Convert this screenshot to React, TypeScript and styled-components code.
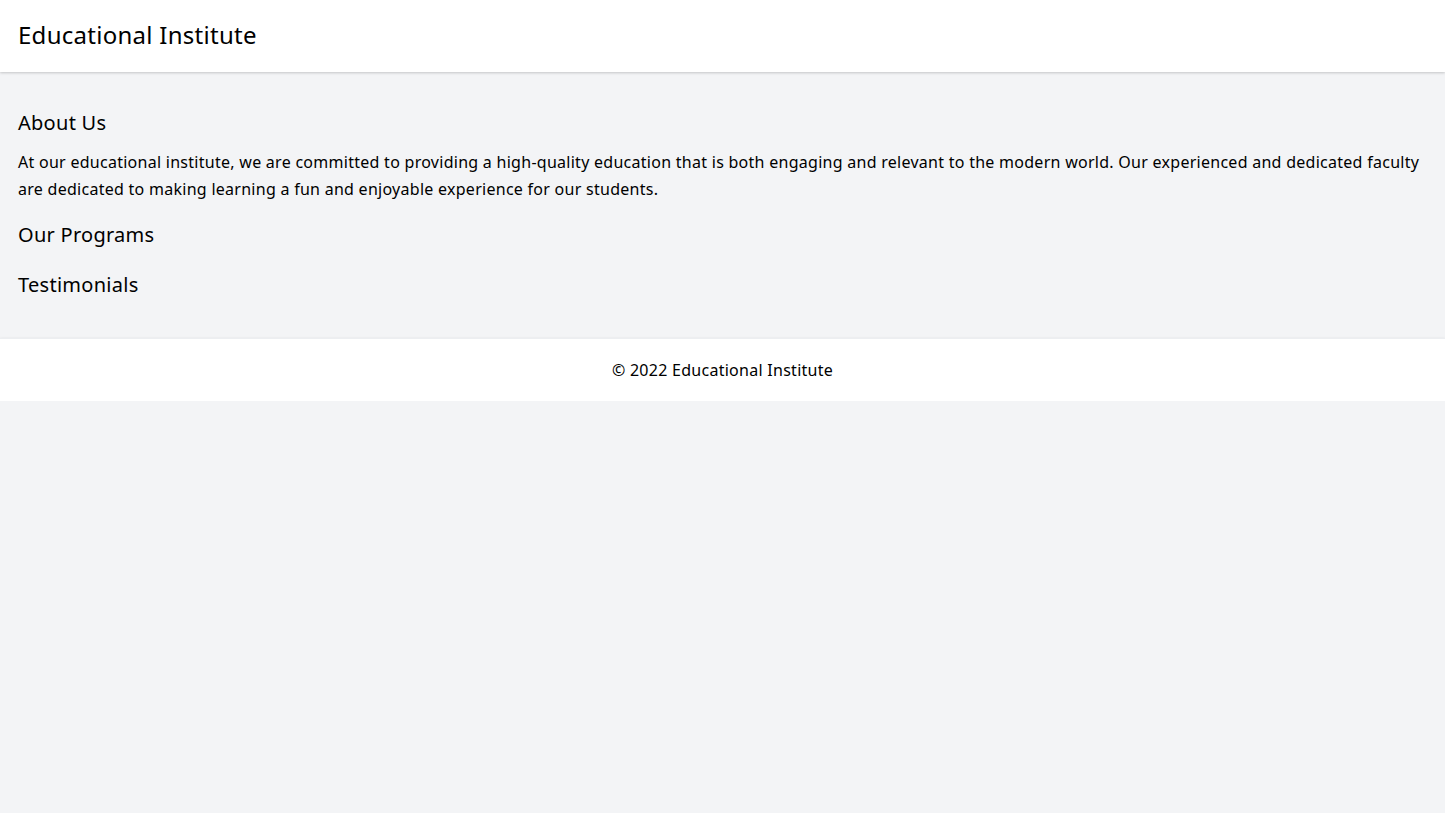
import React from "react";
import styled, { createGlobalStyle } from "styled-components";

const Global = createGlobalStyle`
  html, body { margin: 0; padding: 0; }
  body {
    background: #f3f4f6;
    font-family: "Noto Sans", "Open Sans", sans-serif;
    letter-spacing: 0.017em;
    color: #000;
  }
  * { box-sizing: border-box; }
`;

const Header = styled.header`
  background: #fff;
  box-shadow: 0 1px 3px rgba(0,0,0,0.12), 0 1px 2px rgba(0,0,0,0.08);
  padding: 17px 18px 19px;
  position: relative;
`;

const Title = styled.h1`
  margin: 0;
  font-size: 24px;
  line-height: 36px;
  font-weight: 400;
`;

const Main = styled.main`
  display: flex;
  flex-direction: column;
  gap: 18px;
  padding: 37px 18px 35px;
`;

const Section = styled.section`
  display: flex;
  flex-direction: column;
`;

const Heading = styled.h2`
  margin: 0 0 4px;
  font-size: 20px;
  line-height: 28px;
  font-weight: 400;
`;

const Text = styled.p`
  margin: 8px 0 0;
  font-size: 16px;
  line-height: 27px;
`;

const Footer = styled.footer`
  background: #fff;
  box-shadow: 0 1px 3px rgba(0,0,0,0.12), 0 1px 2px rgba(0,0,0,0.08);
  border-top: 1px solid #eceef1;
  padding: 19px 16px 19px;
  text-align: center;
  font-size: 16px;
  line-height: 24px;
`;

export default function App() {
  return (
    <>
      <Global />
      <Header>
        <Title>Educational Institute</Title>
      </Header>
      <Main>
        <Section>
          <Heading>About Us</Heading>
          <Text>
            At our educational institute, we are committed to providing a high-quality education that is both engaging and relevant to the modern world. Our experienced and dedicated faculty are dedicated to making learning a fun and enjoyable experience for our students.
          </Text>
        </Section>
        <Section>
          <Heading>Our Programs</Heading>
        </Section>
        <Section>
          <Heading>Testimonials</Heading>
        </Section>
      </Main>
      <Footer>© 2022 Educational Institute</Footer>
    </>
  );
}
